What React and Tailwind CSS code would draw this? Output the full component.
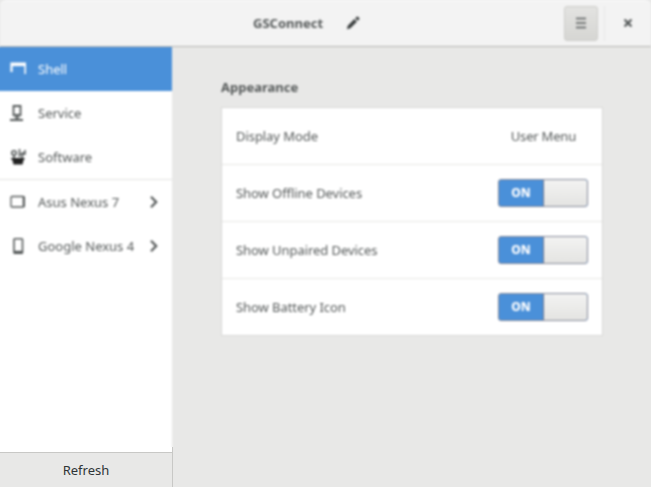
import React from 'react';

const icon = 'block h-4 w-4 shrink-0';

function ShellIcon() {
  return (
    <svg className={icon} viewBox="0 0 16 16" fill="none" stroke="currentColor" strokeWidth="2.2">
      <path d="M1.500 11V2.500h14v10.500" />
      <path d="M1 4h14" />
    </svg>
  );
}

function ServiceIcon() {
  return (
    <svg className={icon} viewBox="0 0 16 16" fill="none" stroke="currentColor" strokeWidth="1.8">
      <path d="M3.5 1h7v9h-7zM0 15h13M7 10v4" />
      <path d="M4 12.5h6" strokeWidth="1" />
    </svg>
  );
}

function SoftwareIcon() {
  return (
    <svg className={icon} viewBox="0 0 16 16" fill="none" stroke="currentColor">
      <path d="M0.500 9h14.500l-1.5 2.500-1 4h-9l-1-4z" fill="#222" stroke="none" />
      <circle cx="4" cy="4" r="2.2" strokeWidth="1.6" />
      <path d="M9.5 0v8M12 9l1-6M9 5h6V1M4 6v3" strokeWidth="1.6" />
    </svg>
  );
}

function TabletIcon() {
  return (
    <svg className={icon} viewBox="0 0 16 16" fill="none" stroke="currentColor">
      <rect x="1" y="2.5" width="13" height="10.5" rx="1" strokeWidth="1.3" />
      <path d="M13.800 2.500v10.500" strokeWidth="2.2" />
    </svg>
  );
}

function PhoneIcon() {
  return (
    <svg className={icon} viewBox="0 0 16 16" fill="none" stroke="currentColor">
      <rect x="4" y="0.800" width="8.500" height="14.400" rx="0.800" strokeWidth="1.6" />
      <path d="M4 14h8.500" strokeWidth="2.4" />
    </svg>
  );
}

function Chevron() {
  return (
    <svg className="mr-2.5 block h-4 w-4 shrink-0" viewBox="0 0 16 16" fill="none" stroke="currentColor" strokeWidth="2.2">
      <path d="M5 2.8 10.2 8 5 13.2" />
    </svg>
  );
}

function NavRow({ Icon, label, active, arrow }) {
  return (
    <div
      className={
        'flex h-11 items-center pl-[18px] ' + (active ? 'bg-[#4a90d9] text-white' : 'text-[#555959]')
      }
    >
      <Icon />
      <span className="ml-3 flex-1 pt-0.5 whitespace-nowrap">{label}</span>
      {arrow && <Chevron />}
    </div>
  );
}

function Switch() {
  return (
    <div className="mr-px flex h-[28px] w-[90px] overflow-hidden rounded-[3px] border border-[#858999] bg-[#4a90d9]">
      <div className="flex w-[44px] items-center justify-center text-xs font-extrabold text-white">ON</div>
      <div className="flex-1 border-l border-[#6c7690] bg-linear-to-b from-[#f3f3f2] to-[#e4e4e2]" />
    </div>
  );
}

function Setting({ label, children }) {
  return (
    <div className="flex h-[57px] items-center justify-between border-b border-[#e6e6e5] pr-[13px] pl-3.5 last:h-14 last:border-b-0">
      <span className="pt-0.5 tracking-[-0.06px]">{label}</span>
      {children}
    </div>
  );
}

export default function App() {
  return (
    <div className="h-[487px] w-[651px] overflow-hidden bg-[#e8e8e7] font-['Noto_Sans',sans-serif] text-[13px] text-[#2e3436]">
      <div className="h-[447px] overflow-hidden">
        <div className="-mx-2 flex h-[467px] flex-col bg-[#e8e8e7] text-[#555959] blur-[1.2px]">
          <header className="mx-2 flex h-[47px] shrink-0 items-center rounded-t-md border-t border-b border-t-white border-b-[#b4b4b1] bg-[#f3f3f3]">
            <h1 className="ml-[253px] w-[93px] text-[13px] font-bold">GSConnect</h1>
            <svg className="-mt-px h-3.5 w-3.5 text-[#3c4040]" viewBox="0 0 16 16" fill="currentColor">
              <path d="m1 15 1-4 7.5-7.5 3 3L5 14zM10.5 2.5 12 1q1-.8 2 0l1 1q.8 1 0 2l-1.500 1.500z" />
            </svg>
            <div className="mr-[6px] -mt-px ml-auto flex h-[35px] w-[34px] items-center justify-center rounded-[3px] border border-[#cdcdca] bg-linear-to-b from-[#e3e3e1] to-[#d6d6d3]">
              <svg className="h-3 w-3" viewBox="0 0 12 12" fill="none" stroke="currentColor" strokeWidth="1.700">
                <path d="M1 1.500h10M1 6h10M1 10.500h10" />
              </svg>
            </div>
            <div className="h-[35px] w-px bg-[#e8e8e8]" />
            <svg className="-mt-px mr-[19px] ml-[19px] h-2 w-2" viewBox="0 0 8 8" fill="none" stroke="currentColor" strokeWidth="2.2">
              <path d="m.5.5 7 7m0-7-7 7" />
            </svg>
          </header>
          <div className="flex flex-1">
            <nav className="w-[180px] bg-white">
              <NavRow Icon={ShellIcon} label="Shell" active />
              <NavRow Icon={ServiceIcon} label="Service" />
              <NavRow Icon={SoftwareIcon} label="Software" />
              <div className="h-px bg-[#e2e2e1]" />
              <NavRow Icon={TabletIcon} label="Asus Nexus 7" arrow />
              <NavRow Icon={PhoneIcon} label="Google Nexus 4" arrow />
            </nav>
            <main className="pt-[30px] pl-[49px]">
              <h2 className="h-[30px] text-[13px] leading-5 font-bold">Appearance</h2>
              <div className="w-[382px] border border-[#d8d8d6] bg-white">
                <Setting label="Display Mode">
                  <span className="mr-[13px] pt-0.5 tracking-[-0.2px]">User Menu</span>
                </Setting>
                <Setting label="Show Offline Devices"><Switch /></Setting>
                <Setting label="Show Unpaired Devices"><Switch /></Setting>
                <Setting label="Show Battery Icon"><Switch /></Setting>
              </div>
            </main>
          </div>
        </div>
      </div>
      <footer className="flex h-10 w-[173px] flex-col border-r border-[#c8c8c6] bg-white">
        <div className="mt-[5px] flex flex-1 items-center justify-center border-t border-[#c8c8c6] bg-[#e8e8e7] pt-0.5">
          Refresh
        </div>
      </footer>
    </div>
  );
}
